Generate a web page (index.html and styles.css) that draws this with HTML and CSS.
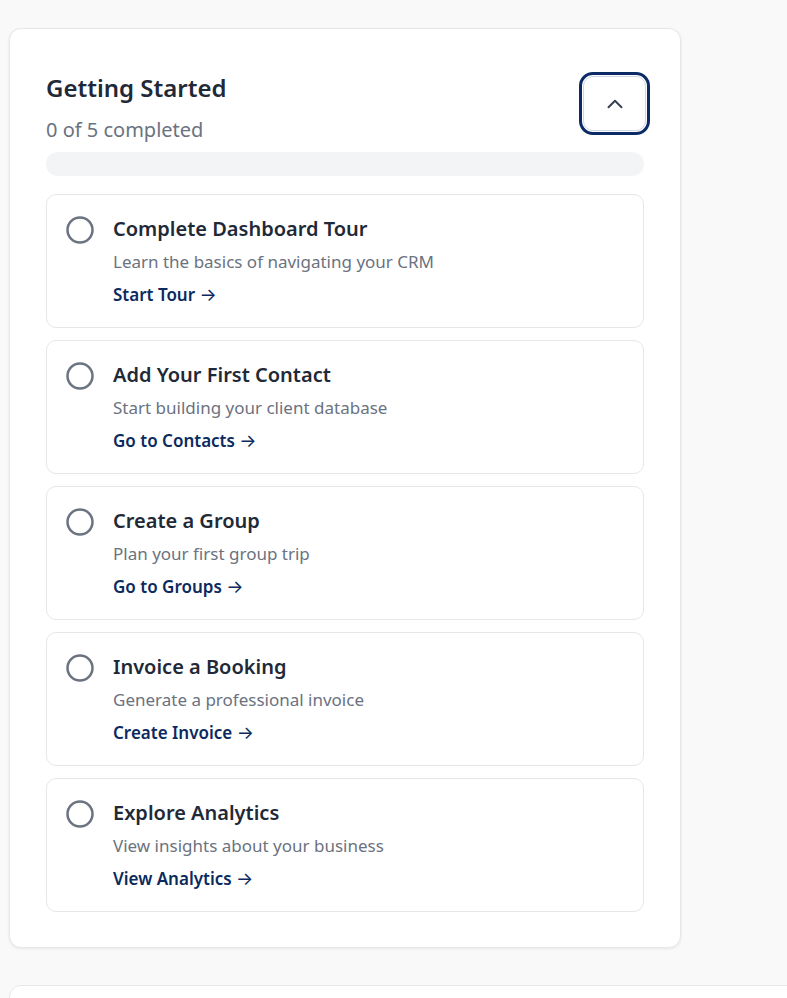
FILE: index.html
```html
<!DOCTYPE html>
<html lang="en">
<head>
    <meta charset="UTF-8">
    <meta name="viewport" content="width=device-width, initial-scale=1.0">
    <title>Getting Started</title>
    <link rel="stylesheet" href="styles.css">
</head>
<body>
    <main class="page">
        <section class="checklist-card">
            <div class="checklist-header">
                <div>
                    <h2 class="checklist-title">Getting Started</h2>
                    <p class="checklist-count">0 of 5 completed</p>
                </div>
                <button class="collapse-button" aria-label="Collapse">
                    <svg width="26" height="26" viewBox="0 0 24 24" fill="none" stroke="currentColor" stroke-width="1.8" stroke-linecap="round" stroke-linejoin="round"><path d="m18 15-6-6-6 6"/></svg>
                </button>
            </div>
            <div class="progress"><div class="progress-fill" style="width: 0%;"></div></div>
            <ul class="task-list">
                <li class="task">
                    <svg class="task-check" width="30" height="30" viewBox="0 0 24 24" fill="none" stroke="currentColor" stroke-width="2"><circle cx="12" cy="12" r="10"/></svg>
                    <div class="task-body">
                        <h3 class="task-title">Complete Dashboard Tour</h3>
                        <p class="task-desc">Learn the basics of navigating your CRM</p>
                        <a href="#" class="task-link">Start Tour <span class="arrow">→</span></a>
                    </div>
                </li>
                <li class="task">
                    <svg class="task-check" width="30" height="30" viewBox="0 0 24 24" fill="none" stroke="currentColor" stroke-width="2"><circle cx="12" cy="12" r="10"/></svg>
                    <div class="task-body">
                        <h3 class="task-title">Add Your First Contact</h3>
                        <p class="task-desc">Start building your client database</p>
                        <a href="#" class="task-link">Go to Contacts <span class="arrow">→</span></a>
                    </div>
                </li>
                <li class="task">
                    <svg class="task-check" width="30" height="30" viewBox="0 0 24 24" fill="none" stroke="currentColor" stroke-width="2"><circle cx="12" cy="12" r="10"/></svg>
                    <div class="task-body">
                        <h3 class="task-title">Create a Group</h3>
                        <p class="task-desc">Plan your first group trip</p>
                        <a href="#" class="task-link">Go to Groups <span class="arrow">→</span></a>
                    </div>
                </li>
                <li class="task">
                    <svg class="task-check" width="30" height="30" viewBox="0 0 24 24" fill="none" stroke="currentColor" stroke-width="2"><circle cx="12" cy="12" r="10"/></svg>
                    <div class="task-body">
                        <h3 class="task-title">Invoice a Booking</h3>
                        <p class="task-desc">Generate a professional invoice</p>
                        <a href="#" class="task-link">Create Invoice <span class="arrow">→</span></a>
                    </div>
                </li>
                <li class="task">
                    <svg class="task-check" width="30" height="30" viewBox="0 0 24 24" fill="none" stroke="currentColor" stroke-width="2"><circle cx="12" cy="12" r="10"/></svg>
                    <div class="task-body">
                        <h3 class="task-title">Explore Analytics</h3>
                        <p class="task-desc">View insights about your business</p>
                        <a href="#" class="task-link">View Analytics <span class="arrow">→</span></a>
                    </div>
                </li>
            </ul>
        </section>
        <section class="next-card"></section>
    </main>
</body>
</html>
```

FILE: styles.css
```css
body {
    margin: 0;
    background: #f9f9f9;
    font-family: 'Noto Sans', 'Open Sans', sans-serif;
    color: #1f2937;
    overflow: hidden;
}
.page {
    padding: 28px 0 0 9px;
}
.checklist-card {
    width: 672px;
    box-sizing: border-box;
    background: #fff;
    border: 1px solid #e5e7eb;
    border-radius: 12px;
    box-shadow: 0 1px 3px rgba(0, 0, 0, 0.08);
    padding: 43px 36px 35px 36px;
}
.checklist-header {
    display: flex;
    justify-content: space-between;
    align-items: flex-start;
}
.checklist-title {
    margin: 0;
    font-size: 24px;
    line-height: 32px;
    font-weight: 600;
    color: #1f2937;
}
.checklist-count {
    margin: 12px 0 0 0;
    font-size: 20px;
    line-height: 27px;
    color: #6b7280;
}
.collapse-button {
    margin: 4px -2px 0 0;
    width: 63px;
    height: 55px;
    display: flex;
    align-items: center;
    justify-content: center;
    background: #fff;
    border: 1px solid #d1d5e4;
    border-radius: 10px;
    outline: 3px solid #0b2a66;
    outline-offset: 1px;
    color: #374151;
    cursor: pointer;
    padding: 0;
}
.progress {
    margin-top: 9px;
    height: 24px;
    border-radius: 12px;
    background: #f3f4f6;
    overflow: hidden;
}
.progress-fill {
    height: 100%;
    background: #0b2a66;
}
.task-list {
    list-style: none;
    margin: 18px 0 0 0;
    padding: 0;
    display: flex;
    flex-direction: column;
    gap: 12px;
}
.task {
    display: flex;
    align-items: flex-start;
    gap: 18px;
    padding: 20px 18px;
    border: 1px solid #e5e7eb;
    border-radius: 10px;
}
.task-check {
    flex-shrink: 0;
    color: #6b7280;
}
.task-title {
    margin: 0;
    font-size: 20px;
    line-height: 28px;
    font-weight: 600;
    color: #1f2937;
}
.task-desc {
    margin: 7px 0 0 0;
    font-size: 17px;
    line-height: 24px;
    color: #6b7280;
}
.task-link {
    display: inline-block;
    margin-top: 9px;
    font-size: 17px;
    line-height: 24px;
    font-weight: 600;
    color: #0b2a5e;
    text-decoration: none;
}
.arrow {
    font-family: Inter, 'DejaVu Sans', sans-serif;
    font-weight: 400;
    font-size: 18px;
    line-height: 1;
}
.next-card {
    margin-top: 37px;
    width: 820px;
    height: 80px;
    background: #fff;
    border: 1px solid #e5e7eb;
    border-radius: 12px;
}
```
